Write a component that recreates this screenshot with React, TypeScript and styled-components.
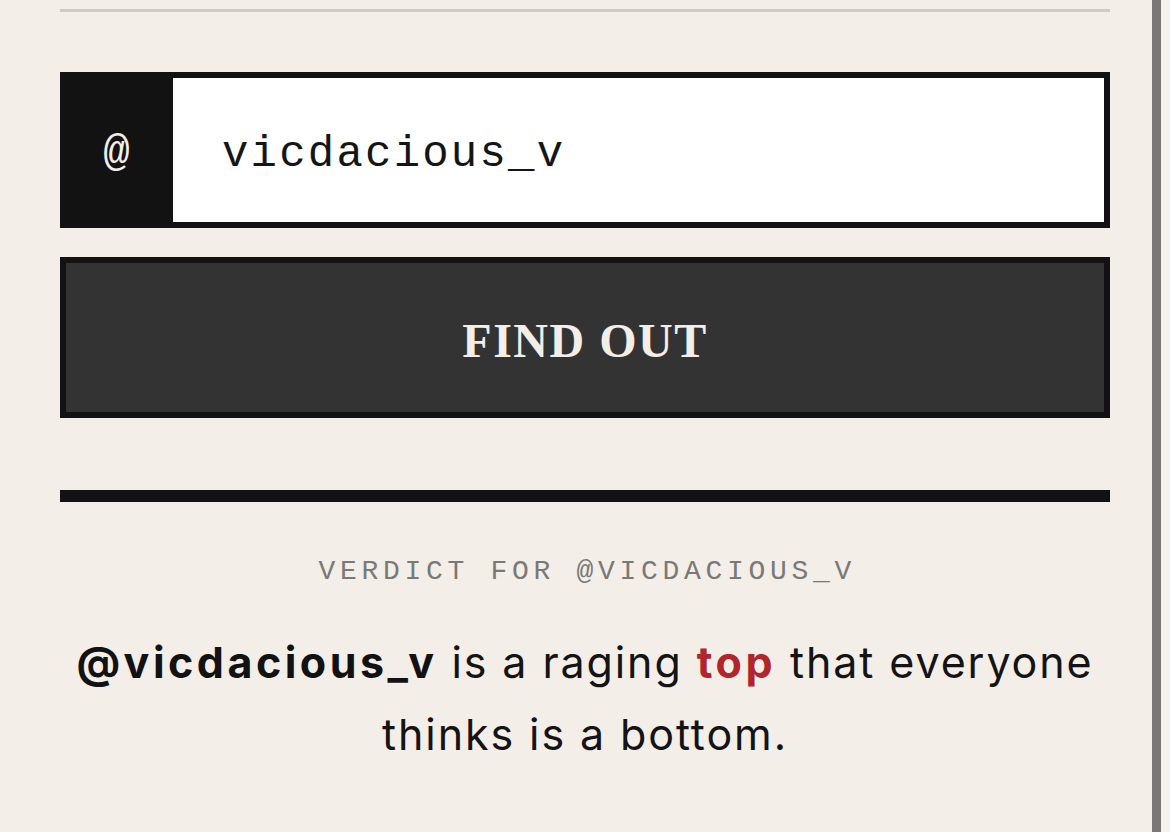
import React from "react";
import styled, { createGlobalStyle } from "styled-components";

const Global = createGlobalStyle`
  html, body {
    margin: 0;
    padding: 0;
    background: #f3eee8;
  }
  body {
    overflow: hidden;
  }
`;

const Page = styled.main`
  width: 1170px;
  height: 832px;
  box-sizing: border-box;
  padding: 9px 60px 0;
  display: flex;
  flex-direction: column;
  background: #f3eee8;
  position: relative;
`;

const TopRule = styled.div`
  height: 3px;
  background: #cdcbc8;
`;

const Form = styled.form`
  margin-top: 60px;
  display: flex;
  flex-direction: column;
  gap: 29px;
`;

const InputRow = styled.label`
  display: flex;
  height: 156px;
  box-sizing: border-box;
  border: 6px solid #121212;
  background: #121212;
`;

const AtCell = styled.span`
  width: 107px;
  display: flex;
  align-items: center;
  justify-content: center;
  color: #f3eee8;
  font-family: "Liberation Mono", "DejaVu Sans Mono", monospace;
  font-size: 44px;
  padding: 6px 6px 0 0;
  box-sizing: border-box;
`;

const Field = styled.input`
  flex: 1;
  min-width: 0;
  border: none;
  outline: none;
  background: #ffffff;
  padding: 8px 0 0 49px;
  margin: 0;
  font-family: "Liberation Mono", "DejaVu Sans Mono", monospace;
  font-size: 44px;
  letter-spacing: 2.2px;
  color: #151515;
`;

const Submit = styled.button`
  height: 161px;
  box-sizing: border-box;
  border: 6px solid #121212;
  background: #333333;
  color: #f3eee8;
  font-family: "Liberation Serif", "DejaVu Serif", serif;
  font-weight: 700;
  font-size: 48px;
  letter-spacing: 1.5px;
  padding: 5px 0 0;
  cursor: pointer;
`;

const ThickRule = styled.div`
  margin-top: 72px;
  height: 12px;
  background: #121212;
`;

const Verdict = styled.section`
  display: flex;
  flex-direction: column;
  align-items: center;
  text-align: center;
`;

const VerdictLabel = styled.div`
  margin-top: 54px;
  font-family: "Liberation Mono", "DejaVu Sans Mono", monospace;
  font-size: 28px;
  letter-spacing: 4.7px;
  color: #7a7975;
  line-height: 32px;
  margin-right: -4.7px;
`;

const Sentence = styled.p`
  margin: 38px 0 0;
  font-family: Inter, "Noto Sans", sans-serif;
  font-size: 43px;
  letter-spacing: 1.9px;
  line-height: 72px;
  color: #141414;
  font-weight: 400;
`;

const Strong = styled.strong<{ $accent?: boolean }>`
  font-weight: 700;
  letter-spacing: 3.5px;
  color: ${(p) => (p.$accent ? "#b0262c" : "#121212")};
`;

const ScrollThumb = styled.div`
  position: fixed;
  top: 0;
  right: 9px;
  width: 9px;
  height: 832px;
  background: #7a7876;
`;

const ScrollTrack = styled.div`
  position: fixed;
  top: 0;
  right: 0;
  width: 9px;
  height: 832px;
  background: #f5f2ee;
`;

export default function App() {
  return (
    <>
      <Global />
      <Page>
        <TopRule />
        <Form onSubmit={(e) => e.preventDefault()}>
          <InputRow>
            <AtCell>@</AtCell>
            <Field defaultValue="vicdacious_v" spellCheck={false} />
          </InputRow>
          <Submit type="submit">FIND OUT</Submit>
        </Form>
        <ThickRule />
        <Verdict>
          <VerdictLabel>VERDICT FOR @VICDACIOUS_V</VerdictLabel>
          <Sentence>
            <Strong>@vicdacious_v</Strong> is a raging <Strong $accent>top</Strong> that everyone
            <br />
            thinks is a bottom.
          </Sentence>
        </Verdict>
        <ScrollThumb />
        <ScrollTrack />
      </Page>
    </>
  );
}
